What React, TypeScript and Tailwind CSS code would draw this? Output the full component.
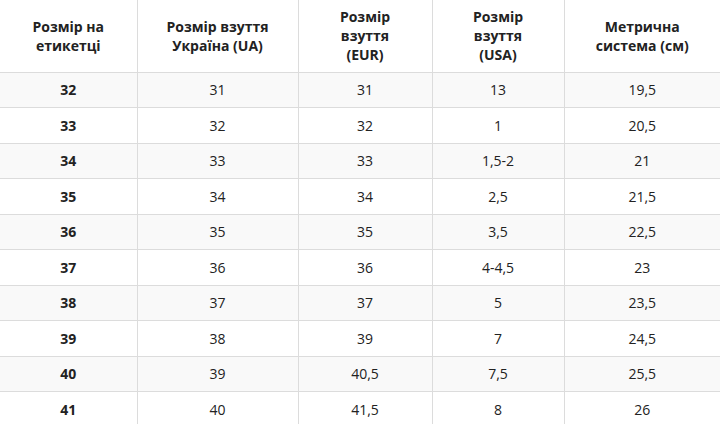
import React from 'react';

const rows: string[][] = [
  ['32', '31', '31', '13', '19,5'],
  ['33', '32', '32', '1', '20,5'],
  ['34', '33', '33', '1,5-2', '21'],
  ['35', '34', '34', '2,5', '21,5'],
  ['36', '35', '35', '3,5', '22,5'],
  ['37', '36', '36', '4-4,5', '23'],
  ['38', '37', '37', '5', '23,5'],
  ['39', '38', '39', '7', '24,5'],
  ['40', '39', '40,5', '7,5', '25,5'],
  ['41', '40', '41,5', '8', '26'],
];

const App: React.FC = () => {
  return (
    <div className="w-[720px] h-[424px] overflow-hidden bg-white text-[#222] font-['Open_Sans',sans-serif]">
      <table className="w-[720px] border-collapse table-fixed text-[14px] text-center">
        <colgroup>
          <col className="w-[137px]" />
          <col className="w-[161px]" />
          <col className="w-[134px]" />
          <col className="w-[132px]" />
          <col className="w-[156px]" />
        </colgroup>
        <thead>
          <tr className="h-[72px] leading-[19px]">
            <th className="border-r border-b border-[#dcdcdc] font-bold">Розмір на<br />етикетці</th>
            <th className="border-x border-b border-[#dcdcdc] font-bold">Розмір взуття<br />Україна (UA)</th>
            <th className="border-x border-b border-[#dcdcdc] font-bold">Розмір<br />взуття<br />(EUR)</th>
            <th className="border-x border-b border-[#dcdcdc] font-bold">Розмір<br />взуття<br />(USA)</th>
            <th className="border-l border-b border-[#dcdcdc] font-bold">Метрична<br />система (см)</th>
          </tr>
        </thead>
        <tbody>
          {rows.map((r, i) => (
            <tr key={r[0]} className={`h-[35.5px] ${i % 2 === 0 ? 'bg-[#f9f9f9]' : 'bg-white'}`}>
              {r.map((c, j) => (
                <td
                  key={j}
                  className={`border-b border-[#dcdcdc] p-0 ${j === 0 ? 'font-bold border-r' : j === 4 ? 'border-l' : 'border-x'}`}
                >
                  {c}
                </td>
              ))}
            </tr>
          ))}
        </tbody>
      </table>
    </div>
  );
};

export default App;
